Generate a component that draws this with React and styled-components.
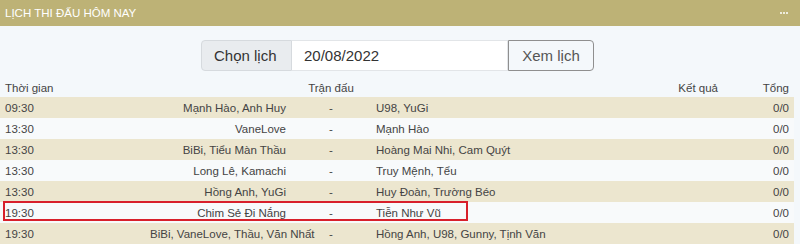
import React from 'react';
import styled, { createGlobalStyle } from 'styled-components';

const GlobalStyle = createGlobalStyle`
  html, body {
    margin: 0;
    padding: 0;
    background: #f4f8fb;
    font-family: 'Liberation Sans', Arial, sans-serif;
  }
`;

const Panel = styled.div`
  width: 800px;
  height: 244px;
  overflow: hidden;
  background: #f4f8fb;
`;

const TitleBar = styled.div`
  height: 26px;
  background: #bdb276;
  display: flex;
  align-items: center;
  justify-content: space-between;
  padding: 0 12px 0 5px;
  color: #fff;
  font-size: 11.5px;
  text-transform: uppercase;
`;

const Dots = styled.span`
  display: flex;
  gap: 1px;
  span {
    width: 2px;
    height: 2px;
    background: #fff;
    border-radius: 1px;
  }
`;

const Toolbar = styled.div`
  display: flex;
  justify-content: flex-start;
  padding: 14px 0 7px 201px;
`;

const InputGroup = styled.div`
  display: flex;
  height: 31px;
  font-size: 15px;
  color: #333;
`;

const Addon = styled.span`
  display: flex;
  align-items: center;
  padding: 0 12px;
  width: 91px;
  box-sizing: border-box;
  background: #e9ecef;
  border: 1px solid #d6dade;
  border-radius: 4px 0 0 4px;
`;

const DateInput = styled.span`
  display: flex;
  align-items: center;
  width: 216px;
  box-sizing: border-box;
  padding: 0 12px;
  background: #fff;
  border: 1px solid #e2e5e8;
  border-left: none;
`;

const Button = styled.button`
  width: 86px;
  height: 31px;
  box-sizing: border-box;
  font: inherit;
  color: #555;
  background: transparent;
  border: 1px solid #8f8f8f;
  border-radius: 0 4px 4px 0;
  padding: 0;
`;

const Row = styled.div`
  position: relative;
  display: grid;
  grid-template-columns: 145px 146px 80px 252px 100px 71px;
  width: 794px;
  height: ${(p) => (p.$head ? 19 : 21)}px;
  align-items: center;
  font-size: 11.5px;
  color: #444;
  background: ${(p) => (p.$head ? 'transparent' : p.$odd ? '#ece6cf' : '#f8fafb')};
`;

const Cell = styled.span`
  padding: 0 5px;
  white-space: nowrap;
  text-align: ${(p) => p.$align || 'left'};
`;

const Highlight = styled.div`
  position: absolute;
  left: 3px;
  top: -1px;
  width: 465px;
  height: 20px;
  box-sizing: border-box;
  border: 2px solid #d8202b;
  pointer-events: none;
`;

const matches = [
  ['09:30', 'Mạnh Hào, Anh Huy', 'U98, YuGi'],
  ['13:30', 'VaneLove', 'Mạnh Hào'],
  ['13:30', 'BiBi, Tiểu Màn Thầu', 'Hoàng Mai Nhi, Cam Quýt'],
  ['13:30', 'Long Lê, Kamachi', 'Truy Mệnh, Tểu'],
  ['13:30', 'Hồng Anh, YuGi', 'Huy Đoàn, Trường Béo'],
  ['19:30', 'Chim Sẻ Đi Nắng', 'Tiễn Như Vũ', true],
  ['19:30', 'BiBi, VaneLove, Thầu, Văn Nhất', 'Hồng Anh, U98, Gunny, Tịnh Văn'],
];

export default function App() {
  return (
    <Panel>
      <GlobalStyle />
      <TitleBar>
        <span>Lịch thi đấu hôm nay</span>
        <Dots>
          <span />
          <span />
          <span />
        </Dots>
      </TitleBar>
      <Toolbar>
        <InputGroup>
          <Addon>Chọn lịch</Addon>
          <DateInput>20/08/2022</DateInput>
          <Button type="button">Xem lịch</Button>
        </InputGroup>
      </Toolbar>
      <Row $head>
        <Cell>Thời gian</Cell>
        <Cell />
        <Cell $align="center">Trận đấu</Cell>
        <Cell />
        <Cell $align="right">Kết quả</Cell>
        <Cell $align="right">Tổng</Cell>
      </Row>
      {matches.map(([time, home, away, marked], i) => (
        <Row key={i} $odd={i % 2 === 0}>
          <Cell>{time}</Cell>
          <Cell $align="right">{home}</Cell>
          <Cell $align="center">-</Cell>
          <Cell>{away}</Cell>
          <Cell />
          <Cell $align="right">0/0</Cell>
          {marked && <Highlight />}
        </Row>
      ))}
    </Panel>
  );
}
